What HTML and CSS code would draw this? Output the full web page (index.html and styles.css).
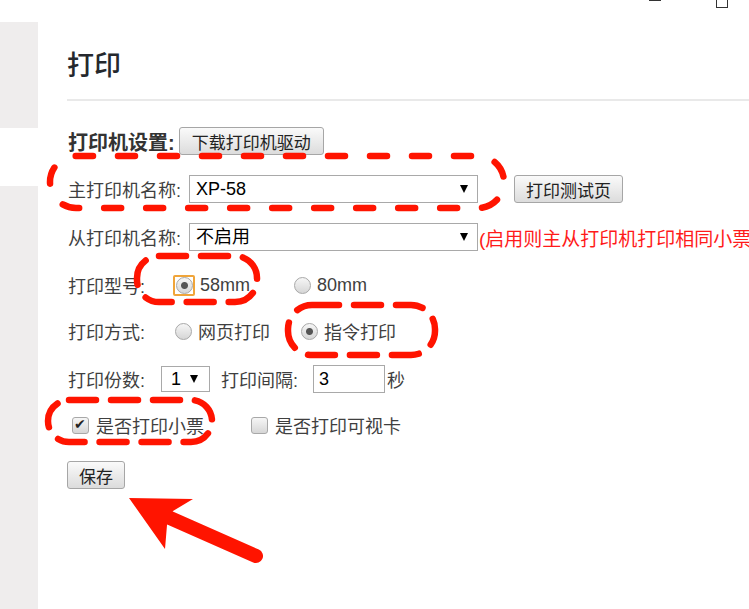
FILE: index.html
```html
<!DOCTYPE html>
<html lang="zh-CN">
<head>
    <meta charset="UTF-8">
    <meta name="viewport" content="width=device-width, initial-scale=1.0">
    <title>打印</title>
    <link rel="stylesheet" href="styles.css">
</head>
<body>
<div class="window-controls">
    <span class="win-min"></span>
    <span class="win-max"></span>
</div>

<div class="page">
    <aside class="sidebar">
        <div class="side-top"></div>
        <div class="side-active"></div>
        <div class="side-rest"></div>
    </aside>

    <main class="content">
        <h2 class="title">打印</h2>

        <form class="settings" id="printForm">
            <div class="row">
                <span class="label-strong">打印机设置:</span>
                <button type="button" class="btn btn-driver">下载打印机驱动</button>
            </div>

            <div class="row">
                <span class="label">主打印机名称:</span>
                <span class="select select-wide">
                    <select name="mainPrinter">
                        <option>XP-58</option>
                    </select>
                </span>
                <button type="button" class="btn btn-test">打印测试页</button>
            </div>

            <div class="row">
                <span class="label">从打印机名称:</span>
                <span class="select select-wide">
                    <select name="subPrinter">
                        <option>不启用</option>
                    </select>
                </span>
                <span class="note">(启用则主从打印机打印相同小票)</span>
            </div>

            <div class="row">
                <span class="label label-fixed">打印型号:</span>
                <label class="option option-wide">
                    <span class="focus-ring"><input type="radio" name="paper" checked></span>
                    58mm
                </label>
                <label class="option">
                    <input type="radio" name="paper">
                    80mm
                </label>
            </div>

            <div class="row row-tight">
                <span class="label label-fixed">打印方式:</span>
                <label class="option">
                    <input type="radio" name="mode">
                    网页打印
                </label>
                <label class="option">
                    <input type="radio" name="mode" checked>
                    指令打印
                </label>
            </div>

            <div class="row">
                <span class="label">打印份数:</span>
                <span class="select select-small">
                    <select name="copies">
                        <option>1</option>
                        <option>2</option>
                        <option>3</option>
                    </select>
                </span>
                <span class="label label-after">打印间隔:</span>
                <input type="text" class="text-input" name="interval" value="3">
                <span class="unit">秒</span>
            </div>

            <div class="row row-tight row-checks">
                <label class="option option-check">
                    <input type="checkbox" name="ticket" checked>
                    是否打印小票
                </label>
                <label class="option">
                    <input type="checkbox" name="card">
                    是否打印可视卡
                </label>
            </div>

            <div class="row row-save">
                <button type="submit" class="btn">保存</button>
            </div>
        </form>
    </main>
</div>

<!-- annotations drawn over the screenshot -->
<svg class="marks" width="749" height="609" viewBox="0 0 749 609">
    <g fill="none" stroke="#ff1400" stroke-width="6.5" stroke-linecap="round">
        <rect x="50" y="156" width="454" height="52" rx="26" stroke-dasharray="17 25"/>
        <rect x="137" y="256" width="120" height="46" rx="22" stroke-dasharray="27 15"/>
        <rect x="288" y="305" width="147" height="50" rx="24" stroke-dasharray="27 15"/>
        <rect x="48" y="400" width="164" height="42" rx="21" stroke-dasharray="27 15"/>
        <line x1="170" y1="518" x2="256" y2="556" stroke-width="14"/>
    </g>
    <polygon fill="#ff1400" points="129,498 193,499 173,511 167,525 165,549"/>
</svg>

<script>
    document.getElementById('printForm').addEventListener('submit', function(event) {
        event.preventDefault();
    });
</script>
</body>
</html>
```

FILE: styles.css
```css
body {
    margin: 0;
    font-family: "Liberation Sans", "Noto Sans CJK SC", sans-serif;
    color: #333;
    background-color: #fff;
    overflow: hidden;
}

.page {
    display: flex;
    height: 100vh;
    padding-top: 22px;
    box-sizing: border-box;
}

.sidebar {
    width: 38px;
    flex-shrink: 0;
    display: flex;
    flex-direction: column;
}

.side-top {
    height: 106px;
    background-color: #efeded;
}

.side-active {
    height: 58px;
}

.side-rest {
    flex: 1;
    background-color: #efeded;
}

.content {
    flex: 1;
    min-width: 0;
    padding-left: 29px;
    overflow: hidden;
}

.title {
    margin: 29px 0 0;
    padding-bottom: 17px;
    font-size: 27px;
    line-height: 31px;
    font-weight: 500;
    color: #25282d;
    border-bottom: 2px solid #e9e9e9;
}

.settings {
    padding-top: 26px;
}

.row {
    display: flex;
    align-items: center;
    height: 28px;
    margin-top: 20px;
    font-size: 18px;
    white-space: nowrap;
}

.row:first-child {
    margin-top: 0;
}

.row-tight {
    margin-top: 18px;
}

.row-save {
    margin-top: 22px;
}

.label-strong {
    font-size: 20px;
    font-weight: bold;
    color: #333;
    margin-left: 1px;
}

.label {
    margin-left: 1px;
    color: #3f3f3f;
}

.label-fixed {
    width: 106px;
}

.label-after {
    margin-left: 11px;
}

/* buttons */
.btn {
    height: 28px;
    padding: 0 11px;
    font-family: inherit;
    font-size: 17px;
    color: #222;
    border: 1px solid #a6a6a6;
    border-radius: 3px;
    background: linear-gradient(#fafafa, #dcdcdc);
    cursor: pointer;
}

.btn-driver {
    margin-left: 4px;
    padding: 0 12px;
}

.btn-test {
    margin-left: 36px;
}

/* selects */
.select {
    position: relative;
    display: inline-block;
    margin-left: 8px;
}

.select select {
    appearance: none;
    -webkit-appearance: none;
    height: 28px;
    padding: 0 0 0 6px;
    font-family: inherit;
    font-size: 18px;
    color: #000;
    background-color: #fff;
    border: 1px solid #a9a9a9;
    border-radius: 0;
    display: block;
}

.select::after {
    content: "";
    position: absolute;
    top: 10px;
    right: 10px;
    border-left: 4.5px solid transparent;
    border-right: 4.5px solid transparent;
    border-top: 8px solid #000;
    pointer-events: none;
}

.select-wide select {
    width: 289px;
}

.select-small {
    margin-left: 16px;
}

.select-small select {
    width: 49px;
    height: 26px;
    padding-left: 9px;
}

.select-small::after {
    top: 9px;
    right: 12px;
}

.note {
    margin-left: 1px;
    font-size: 19px;
    color: #ff1a1a;
}

.text-input {
    width: 72px;
    height: 28px;
    margin-left: 15px;
    padding: 0 5px;
    box-sizing: border-box;
    font-family: inherit;
    font-size: 18px;
    color: #000;
    border: 1px solid #a9a9a9;
}

.unit {
    margin-left: 2px;
    color: #3f3f3f;
}

/* radios and checkboxes */
.option {
    display: flex;
    align-items: center;
    margin-right: 30px;
    color: #3f3f3f;
}

.option-wide {
    margin-right: 43px;
}

.option input {
    appearance: none;
    -webkit-appearance: none;
    width: 17px;
    height: 17px;
    margin: 0 6px 0 0;
    border: 1px solid #a8a8a8;
    background: linear-gradient(#f6f6f6, #d6d6d6);
    position: relative;
}

.option input[type="radio"] {
    border-radius: 50%;
    margin-left: 1px;
}

.option input[type="radio"]:checked {
    background: radial-gradient(circle, #555 0 3px, rgba(85, 85, 85, 0) 4px),
                linear-gradient(#f6f6f6, #d6d6d6);
}

.option input[type="checkbox"] {
    border-radius: 3px;
    margin-right: 7px;
}

.option input[type="checkbox"]:checked::after {
    content: "✔";
    position: absolute;
    top: -2px;
    left: 1px;
    font-family: "DejaVu Sans", sans-serif;
    font-size: 14px;
    font-weight: bold;
    color: #222;
}

.focus-ring {
    display: flex;
    margin: 0 5px 0 -1px;
    border: 2px solid #f0a53a;
    border-radius: 2px;
}

.focus-ring input {
    margin: 0;
}

.row-checks {
    padding-left: 5px;
}

.option-check {
    margin-right: 47px;
}

/* annotation layer */
.marks {
    position: absolute;
    top: 0;
    left: 0;
    pointer-events: none;
}

.window-controls .win-min {
    position: absolute;
    top: 0;
    left: 649px;
    width: 12px;
    height: 1px;
    background-color: #333;
}

.window-controls .win-max {
    position: absolute;
    top: -4px;
    left: 716px;
    width: 10px;
    height: 10px;
    border: 1px solid #333;
}
```
